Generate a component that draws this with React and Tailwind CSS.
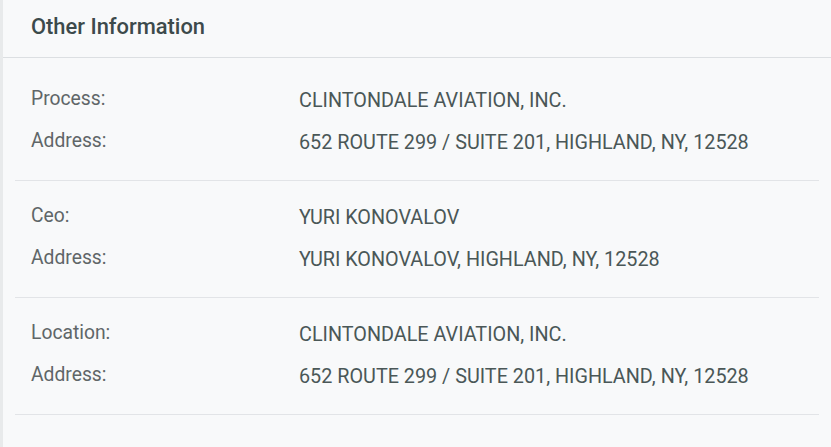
import React from 'react';

const groups = [
  [
    ['Process:', 'CLINTONDALE AVIATION, INC.'],
    ['Address:', '652 ROUTE 299 / SUITE 201, HIGHLAND, NY, 12528'],
  ],
  [
    ['Ceo:', 'YURI KONOVALOV'],
    ['Address:', 'YURI KONOVALOV, HIGHLAND, NY, 12528'],
  ],
  [
    ['Location:', 'CLINTONDALE AVIATION, INC.'],
    ['Address:', '652 ROUTE 299 / SUITE 201, HIGHLAND, NY, 12528'],
  ],
];

const App = () => {
  return (
    <div className="w-[831px] h-[447px] bg-[#f8f9fa] border-l-[3px] border-[#e8eaeb] font-['Roboto',sans-serif] overflow-hidden">
      {/* Header */}
      <div className="h-[58px] pt-[13px] pl-[28px] border-b border-[#dcdfe2]">
        <h2 className="text-[21.9px] leading-[28px] font-medium text-[#3c4a4b]">Other Information</h2>
      </div>

      <div className="px-[12px] pt-[6px]">
        {groups.map((rows, gi) => (
          <div key={gi} className="border-b border-[#e2e4e7] pt-[16px] pb-[16px] pl-[16px]">
            {rows.map(([label, value], ri) => (
              <div key={ri} className="flex items-start h-[42px]">
                <div className="w-[268px] shrink-0 text-[19.3px] leading-[37px] text-[#5f6668]">{label}</div>
                <div className="text-[19.8px] leading-[42px] text-[#4a5757]">{value}</div>
              </div>
            ))}
          </div>
        ))}
      </div>
    </div>
  );
};

export default App;
